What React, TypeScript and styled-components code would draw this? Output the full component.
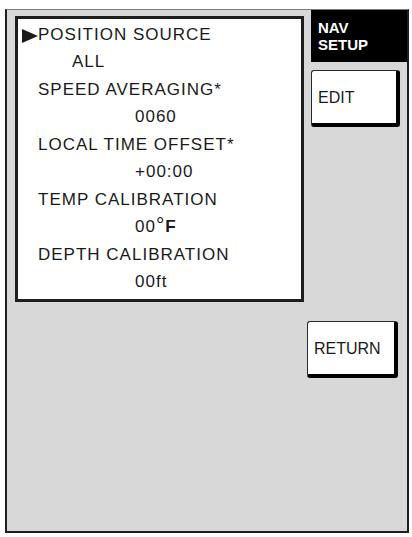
import { FC } from "react";
import styled, { createGlobalStyle } from "styled-components";

const GlobalStyle = createGlobalStyle`
  body {
    margin: 0;
    background: #ffffff;
    font-family: "Liberation Sans", Arial, sans-serif;
    color: #1a1a1a;
  }
`;

const Frame = styled("div")`
  margin: 9px 0 0 5px;
  width: 404px;
  height: 524px;
  box-sizing: border-box;
  background: #d8d8d8;
  border: 2px solid #1e1e1e;
  border-top: 1px solid #7a7a7a;
  display: flex;
  align-items: flex-start;
  padding-left: 8px;
`;

const MenuBox = styled("div")`
  margin-top: 6px;
  width: 289px;
  height: 286px;
  box-sizing: border-box;
  background: #ffffff;
  border: 3px solid #1e1e1e;
  padding: 2px 0 0 4px;
`;

const Row = styled("div")<{ indent: number }>`
  display: flex;
  align-items: center;
  height: 27.5px;
  padding-left: ${({ indent }) => indent}px;
  font-size: 17px;
  letter-spacing: 1px;
  white-space: nowrap;
`;

const Cursor = styled("svg")`
  width: 16px;
  height: 14px;
  flex: none;
  margin-top: 2px;
`;

const Deg = styled("span")`
  font-size: 21px;
  line-height: 1;
  position: relative;
  top: -3px;
  letter-spacing: 0;
  margin: 0 1px 0 0;
`;

const Unit = styled("span")`
  font-weight: bold;
`;

const SideColumn = styled("div")`
  margin-left: 7px;
  width: 96px;
  display: flex;
  flex-direction: column;
`;

const Title = styled("div")`
  height: 52px;
  box-sizing: border-box;
  background: #000000;
  color: #ffffff;
  font-weight: bold;
  font-size: 15px;
  line-height: 17px;
  padding: 9px 0 0 7px;
`;

const SoftKey = styled("div")<{ top: number; shift?: number; wide?: number }>`
  margin-top: ${({ top }) => top}px;
  margin-left: ${({ shift }) => shift ?? 0}px;
  width: ${({ wide }) => wide ?? 89}px;
  height: 57px;
  box-sizing: border-box;
  background: #ffffff;
  border: 1.5px solid #2a2a2a;
  border-right: 4px solid #000000;
  border-bottom: 4px solid #000000;
  border-radius: 3px;
  display: flex;
  align-items: center;
  padding: 2px 0 0 6px;
  font-size: 16px;
`;

const items: { label: string; value: React.ReactNode; valueIndent: number }[] = [
  { label: "POSITION SOURCE", value: "ALL", valueIndent: 50 },
  { label: "SPEED AVERAGING*", value: "0060", valueIndent: 113 },
  { label: "LOCAL TIME OFFSET*", value: "+00:00", valueIndent: 113 },
  {
    label: "TEMP CALIBRATION",
    value: (
      <>
        00<Deg>°</Deg>
        <Unit>F</Unit>
      </>
    ),
    valueIndent: 113,
  },
  { label: "DEPTH CALIBRATION", value: "00ft", valueIndent: 113 },
];

const App: FC = () => {
  return (
    <>
      <GlobalStyle />
      <Frame>
        <MenuBox>
          {items.map((item, i) => (
            <div key={item.label}>
              <Row indent={i === 0 ? 0 : 16}>
                {i === 0 && (
                  <Cursor viewBox="0 0 16 14">
                    <polygon points="0,0 16,7 0,14" fill="#1a1a1a" />
                  </Cursor>
                )}
                {item.label}
              </Row>
              <Row indent={item.valueIndent}>{item.value}</Row>
            </div>
          ))}
        </MenuBox>
        <SideColumn>
          <Title>
            NAV
            <br />
            SETUP
          </Title>
          <SoftKey top={8}>EDIT</SoftKey>
          <SoftKey top={194} shift={-4} wide={91}>
            RETURN
          </SoftKey>
        </SideColumn>
      </Frame>
    </>
  );
};

export default App;
